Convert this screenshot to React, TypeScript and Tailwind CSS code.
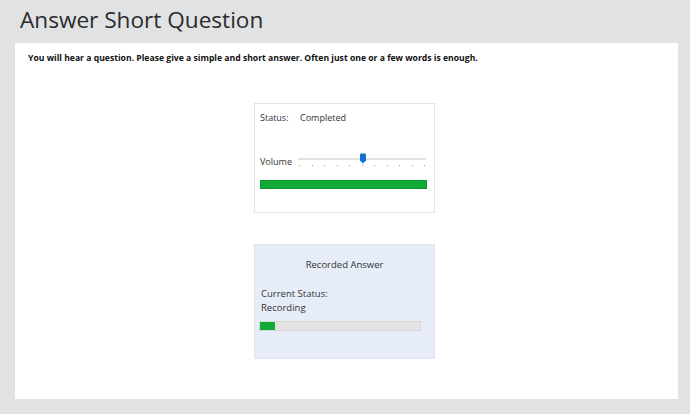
export default function App() {
  const ticks = Array.from({ length: 11 })
  return (
    <main className="w-[690px] h-[414px] bg-[#e1e2e4] overflow-hidden flex flex-col" style={{ fontFamily: '"Open Sans", "Noto Sans", sans-serif' }}>
      <h1 className="pl-[20px] pt-[5px] h-[43px] text-[22.6px] leading-[30px] text-[#2b2b2b]">Answer Short Question</h1>

      <div className="ml-[15px] w-[663px] bg-white h-[356px] flex flex-col">
        <p className="pl-[13px] pt-[9px] text-[8.65px] leading-[12px] font-bold text-[#111]">
          You will hear a question. Please give a simple and short answer. Often just one or a few words is enough.
        </p>

        <div className="flex flex-col items-center pt-[39px] pr-[4px]">
          {/* Player */}
          <div className="w-[181px] h-[110px] border border-[#e4e4e4] bg-white pl-[5px] pr-[7px] pt-[8px] text-[#333]">
            <div className="flex text-[9px] leading-[12px]">
              <span className="w-[40px]">Status:</span>
              <span>Completed</span>
            </div>
            <div className="flex items-center mt-[27px] h-[20px]">
              <span className="text-[9px] leading-[12px] w-[39px] pt-[1px]">Volume</span>
              <div className="relative flex-1 h-[20px] ml-[-1px] mr-[1px]">
                <div className="absolute left-0 right-0 top-[7px] h-[2px] bg-[#e2e2e2]" />
                <div className="absolute left-0 right-0 top-[14px] flex justify-between px-[1px]">
                  {ticks.map((_, i) => (
                    <span key={i} className="w-[1px] h-[1px] bg-[#9a9a9a]" />
                  ))}
                </div>
                <svg className="absolute left-[61px] top-[2px]" width="8" height="11" viewBox="0 0 8 11">
                  <path d="M1 1.5 Q1 0.5 2 0.5 H6 Q7 0.5 7 1.5 V7.5 L4 10.5 L1 7.5 Z" fill="#1272d6" />
                </svg>
              </div>
            </div>
            <div className="mt-[9px] h-[9px] bg-[#10ab37] border border-[#0c9a30]" />
          </div>

          {/* Recorder */}
          <div className="mt-[31px] w-[181px] h-[115px] bg-[#e6edf8] border border-[#dde4ef] px-[4px] text-[#333]">
            <p className="text-center text-[9.5px] leading-[12px] pt-[14px]">Recorded Answer</p>
            <div className="pl-[2px]">
              <p className="text-[9.5px] leading-[14px] mt-[16px]">Current Status:</p>
              <p className="text-[9.5px] leading-[14px]">Recording</p>
            </div>
            <div className="mt-[6px] w-[162px] h-[10px] bg-[#e3e3e3] border border-[#d6d6d6] flex">
              <div className="w-[15px] h-full bg-[#10ab37]" />
            </div>
          </div>
        </div>
      </div>
    </main>
  )
}
